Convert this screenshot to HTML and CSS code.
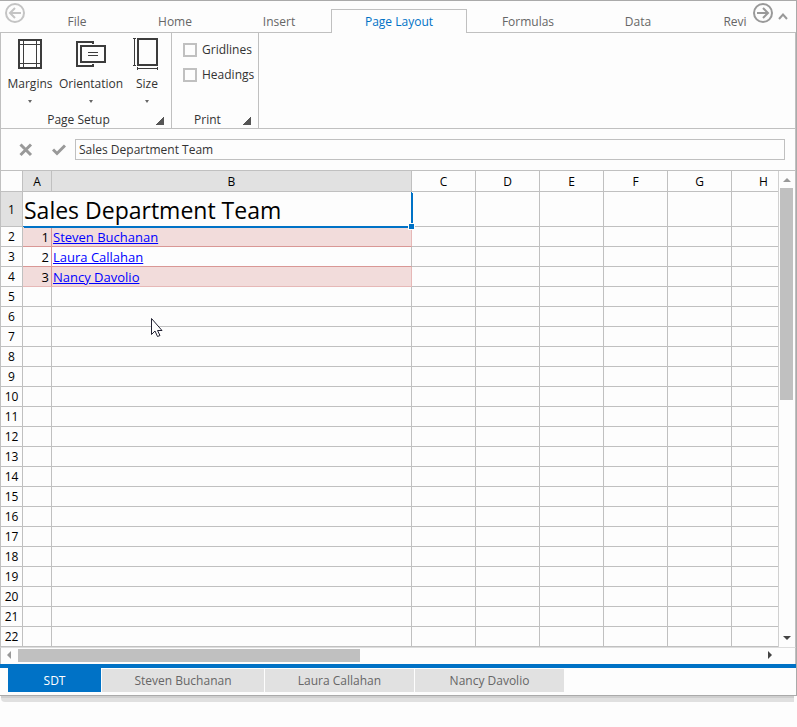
FILE: index.html
```html
<!DOCTYPE html>
<html lang="en">
<head>
<meta charset="utf-8">
<title>Sales Department Team</title>
<link rel="stylesheet" href="styles.css">
</head>
<body>
<main class="app">
  <header class="tabbar">
    <button class="round-btn round-btn-off" aria-label="Scroll tabs left">
      <svg width="20" height="20" viewBox="0 0 20 20"><circle cx="10" cy="10" r="9"/><path d="M16 10H6M10 5L5 10L10 15"/></svg>
    </button>
    <nav class="tabs">
      <button class="tab tab-file">File</button>
      <button class="tab tab-mid">Home</button>
      <button class="tab tab-mid">Insert</button>
      <button class="tab tab-wide tab-active">Page Layout</button>
      <button class="tab tab-long">Formulas</button>
      <button class="tab tab-data">Data</button>
      <button class="tab tab-review">Review</button>
    </nav>
    <button class="round-btn" aria-label="Scroll tabs right">
      <svg width="20" height="20" viewBox="0 0 20 20"><circle cx="10" cy="10" r="9"/><path d="M4 10H14M10 5L15 10L10 15"/></svg>
    </button>
    <button class="collapse-btn" aria-label="Collapse ribbon">
      <svg width="10" height="8" viewBox="0 0 10 8"><path d="M1 7L5 2.500L9 7"/></svg>
    </button>
  </header>

  <section class="ribbon">
    <div class="group group-setup">
      <div class="group-items">
        <button class="tool tool-margins">
          <svg width="34" height="34" viewBox="0 0 34 34"><path class="thick" d="M6 3H28V31H6Z"/><path class="thin" d="M10.500 2V32M23.500 2V32M5 7.500H29M5 26.500H29"/></svg>
          <span>Margins</span><i class="drop"></i>
        </button>
        <button class="tool tool-orientation">
          <svg width="34" height="34" viewBox="0 0 34 34"><path class="thick" d="M19 7V5H3V29H19V27M7 9H31V25H7Z"/><path class="thin" d="M14 15.500H24M14 18.500H24"/></svg>
          <span>Orientation</span><i class="drop"></i>
        </button>
        <button class="tool tool-size">
          <svg width="34" height="34" viewBox="0 0 34 34"><path class="thick" d="M8 2H27V28H8Z"/><path class="thin" d="M3 1.500H6M3 28.500H6M4.500 1V29M7.500 30V33M27.500 30V33M7 31.500H28"/></svg>
          <span>Size</span><i class="drop"></i>
        </button>
      </div>
      <div class="group-title">Page Setup<button class="launcher" aria-label="Page setup options"></button></div>
    </div>
    <div class="group group-print">
      <div class="checks">
        <label class="check"><input type="checkbox">Gridlines</label>
        <label class="check"><input type="checkbox">Headings</label>
      </div>
      <div class="group-title">Print<button class="launcher" aria-label="Print options"></button></div>
    </div>
  </section>

  <section class="formula">
    <button class="formula-btn" aria-label="Cancel"><svg width="14" height="14" viewBox="0 0 14 14"><path d="M1.500 1.500L12 12M12 1.500L1.500 12"/></svg></button>
    <button class="formula-btn" aria-label="Enter"><svg width="14" height="14" viewBox="0 0 14 14"><path d="M1 6.500L5 10.500L13 2.500"/></svg></button>
    <input class="formula-input" type="text" aria-label="Formula" value="Sales Department Team">
  </section>

  <section class="sheet">
    <div class="grid">
      <table class="cells">
        <colgroup><col class="c-num"><col class="c-a"><col class="c-b"><col class="c-n"><col class="c-n"><col class="c-n"><col class="c-n"><col class="c-n"><col class="c-n"></colgroup>
        <thead><tr><th></th><th class="on">A</th><th class="on">B</th><th>C</th><th>D</th><th>E</th><th>F</th><th>G</th><th>H</th></tr></thead>
        <tbody>
          <tr class="title-row"><th class="on">1</th><td colspan="2" class="title-cell">Sales Department Team<span class="handle"></span></td><td></td><td></td><td></td><td></td><td></td><td></td></tr>
          <tr class="rec band"><th>2</th><td class="num">1</td><td><a href="#steven">Steven Buchanan</a></td><td></td><td></td><td></td><td></td><td></td><td></td></tr>
          <tr class="rec"><th>3</th><td class="num">2</td><td><a href="#laura">Laura Callahan</a></td><td></td><td></td><td></td><td></td><td></td><td></td></tr>
          <tr class="rec band last"><th>4</th><td class="num">3</td><td><a href="#nancy">Nancy Davolio</a></td><td></td><td></td><td></td><td></td><td></td><td></td></tr>
          <tr><th>5</th><td></td><td></td><td></td><td></td><td></td><td></td><td></td><td></td></tr>
          <tr><th>6</th><td></td><td></td><td></td><td></td><td></td><td></td><td></td><td></td></tr>
          <tr><th>7</th><td></td><td></td><td></td><td></td><td></td><td></td><td></td><td></td></tr>
          <tr><th>8</th><td></td><td></td><td></td><td></td><td></td><td></td><td></td><td></td></tr>
          <tr><th>9</th><td></td><td></td><td></td><td></td><td></td><td></td><td></td><td></td></tr>
          <tr><th>10</th><td></td><td></td><td></td><td></td><td></td><td></td><td></td><td></td></tr>
          <tr><th>11</th><td></td><td></td><td></td><td></td><td></td><td></td><td></td><td></td></tr>
          <tr><th>12</th><td></td><td></td><td></td><td></td><td></td><td></td><td></td><td></td></tr>
          <tr><th>13</th><td></td><td></td><td></td><td></td><td></td><td></td><td></td><td></td></tr>
          <tr><th>14</th><td></td><td></td><td></td><td></td><td></td><td></td><td></td><td></td></tr>
          <tr><th>15</th><td></td><td></td><td></td><td></td><td></td><td></td><td></td><td></td></tr>
          <tr><th>16</th><td></td><td></td><td></td><td></td><td></td><td></td><td></td><td></td></tr>
          <tr><th>17</th><td></td><td></td><td></td><td></td><td></td><td></td><td></td><td></td></tr>
          <tr><th>18</th><td></td><td></td><td></td><td></td><td></td><td></td><td></td><td></td></tr>
          <tr><th>19</th><td></td><td></td><td></td><td></td><td></td><td></td><td></td><td></td></tr>
          <tr><th>20</th><td></td><td></td><td></td><td></td><td></td><td></td><td></td><td></td></tr>
          <tr><th>21</th><td></td><td></td><td></td><td></td><td></td><td></td><td></td><td></td></tr>
          <tr><th>22</th><td></td><td></td><td></td><td></td><td></td><td></td><td></td><td></td></tr>
        </tbody>
      </table>
      <svg class="pointer" width="13" height="21" viewBox="0 0 13 21"><path d="M1.500 1.500V17.500L5 14L7.500 19.500L10 18.500L7.500 13.500H12Z"/></svg>
    </div>
    <div class="vscroll"><i class="arrow up"></i><div class="vtrack"><div class="vthumb"></div></div><i class="arrow down"></i></div>
  </section>
  <div class="hscroll"><i class="arrow left"></i><div class="htrack"><div class="hthumb"></div></div><i class="arrow right"></i></div>

  <footer class="sheets">
    <button class="sheet-tab sheet-active">SDT</button>
    <button class="sheet-tab sheet-long">Steven Buchanan</button>
    <button class="sheet-tab sheet-mid">Laura Callahan</button>
    <button class="sheet-tab sheet-mid">Nancy Davolio</button>
  </footer>
</main>
<div class="shade"></div>
</body>
</html>
```
FILE: styles.css
```css
* { box-sizing: border-box; }

body {
  margin: 0;
  background: #fdfdfd;
  color: #333;
  font: 12px/16px "Open Sans", "Noto Sans", sans-serif;
}

button {
  margin: 0;
  padding: 0;
  border: 0;
  background: none;
  color: inherit;
  font: inherit;
}

svg { display: block; fill: none; }

.app {
  border-top: 1px solid #aaa;
  border-right: 1px solid #aaa;
  border-bottom: 1px solid #aaa;
}
.shade {
  height: 6px;
  margin: 0 3px 0 1px;
  border-top: 2px solid #cfcfcf;
  border-radius: 0 0 0 4px;
  background: #e0e0e0;
}

/* Ribbon tabs */
.tabbar {
  display: flex;
  height: 32px;
  padding: 0 7px 0 5px;
  box-shadow: inset 0 -1px #c0c0c0;
}
.round-btn { width: 20px; height: 20px; margin-top: 2px; flex: none; }
.round-btn svg { stroke: #999; stroke-width: 2; }
.round-btn-off svg { stroke: #c4c4c4; }
.tabs {
  display: flex;
  flex: 1;
  min-width: 0;
  margin-right: 6px;
  padding: 8px 0 0 6px;
  overflow: hidden;
}
.tab {
  flex: none;
  height: 24px;
  border: 1px solid transparent;
  border-bottom: 0;
  color: #666;
}
.tab-file { width: 92px; }
.tab-mid { width: 104px; }
.tab-wide { width: 136px; }
.tab-long { width: 122px; }
.tab-data { width: 98px; }
.tab-review { width: 112px; }
.tab-active { border-color: #c0c0c0; background: #fdfdfd; color: #0072c6; }
.collapse-btn { margin: 10px 1px 0 5px; height: 10px; }
.collapse-btn svg { stroke: #999; stroke-width: 2; }

/* Ribbon groups */
.ribbon {
  display: flex;
  height: 96px;
  border-left: 1px solid #c0c0c0;
  border-right: 1px solid #c0c0c0;
  border-bottom: 1px solid #c0c0c0;
}
.group {
  display: flex;
  flex-direction: column;
  justify-content: space-between;
  border-right: 1px solid #c0c0c0;
}
.group-setup { width: 171px; }
.group-print { width: 87px; }
.group-items { display: flex; padding: 4px 0 0 4px; }
.tool { display: flex; flex-direction: column; align-items: center; }
.tool-margins { width: 50px; }
.tool-orientation { width: 72px; }
.tool-size { width: 40px; }
.tool span { margin-top: 5px; }
.thick { stroke: #3c3c3c; stroke-width: 2; }
.thin { stroke: #3c3c3c; stroke-width: 1; }
.drop {
  margin-top: 8px;
  border: 2px solid transparent;
  border-top: 3px solid #666;
  border-bottom: 0;
}
.group-title {
  display: flex;
  justify-content: center;
  height: 16px;
  position: relative;
  padding-right: 15px;
}
.launcher {
  position: absolute;
  right: 7px;
  bottom: 3px;
  width: 8px;
  height: 8px;
  background: linear-gradient(135deg, transparent 50%, #555 50%);
}
.checks { display: flex; flex-direction: column; gap: 9px; padding: 9px 0 0 11px; }
.check { display: flex; align-items: center; gap: 5px; white-space: nowrap; }
.check input {
  appearance: none;
  width: 14px;
  height: 14px;
  margin: 0;
  border: 2px solid #c0c0c0;
}

/* Formula bar */
.formula {
  display: flex;
  align-items: center;
  height: 42px;
  padding: 0 10px 0 18px;
  border: 1px solid #c0c0c0;
  border-top: 0;
}
.formula-btn { margin-right: 19px; }
.formula-btn + .formula-btn { margin-right: 9px; }
.formula-btn svg { stroke: #999; stroke-width: 3; }
.formula-input {
  flex: 1;
  min-width: 0;
  height: 21px;
  padding: 0 3px;
  border: 1px solid #c0c0c0;
  background: #fdfdfd;
  color: #333;
  font: inherit;
  outline: none;
}

/* Sheet */
.sheet {
  display: flex;
  border-left: 1px solid #c0c0c0;
  border-right: 1px solid #c0c0c0;
}
.grid {
  position: relative;
  flex: 1;
  min-width: 0;
  overflow: hidden;
  border-right: 1px solid #d0d0d0;
}
.cells {
  width: 795px;
  table-layout: fixed;
  border-spacing: 0;
  color: #000;
}
.c-num { width: 22px; }
.c-a { width: 29px; }
.c-b { width: 360px; }
.c-n { width: 64px; }
.cells th, .cells td {
  height: 20px;
  padding: 2px 1px 0;
  border-right: 1px solid #c0c0c0;
  border-bottom: 1px solid #c0c0c0;
  line-height: 17px;
  white-space: nowrap;
}
.cells th { padding: 0; font-weight: 400; line-height: 19px; }
.cells thead th { height: 21px; }
.cells .on { background: #e1e1e1; }
.cells td { font-size: 13px; }
.cells .num { padding-right: 2px; text-align: right; }
.cells .title-row > * { height: 35px; }
.cells .title-cell {
  position: relative;
  border-color: #0072c6;
  box-shadow: 1px 1px #0072c6;
  font-size: 23px;
  line-height: 32px;
}
.handle {
  position: absolute;
  right: -4px;
  bottom: -4px;
  width: 7px;
  height: 7px;
  border: 1px solid #fdfdfd;
  background: #0072c6;
}
.rec td:nth-child(2), .rec td:nth-child(3) { border-bottom-color: #d99795; }
.rec .num { border-right-color: #d99795; }
.band td:nth-child(2), .band td:nth-child(3) { background: #f2dcdb; }
.band td:nth-child(3) { border-right-color: #e6b8b7; }
.last td:nth-child(2), .last td:nth-child(3) { border-bottom-color: #e6b8b7; }
.cells a { color: #00f; }
.pointer { position: absolute; left: 149px; top: 146px; }
.pointer path { fill: #fff; stroke: #223; }

/* Scroll bars */
.vscroll { display: flex; flex-direction: column; align-items: center; width: 16px; padding: 7px 2px 7px 1px; }
.vtrack { flex: 1; width: 13px; margin: 6px 0; }
.vthumb { width: 100%; height: 48%; background: #c0c0c0; }
.hscroll {
  display: flex;
  align-items: center;
  height: 17px;
  padding: 0 23px 2px 6px;
  border: 1px solid #c0c0c0;
  border-top-color: #ddd;
  border-bottom: 0;
}
.htrack { flex: 1; height: 13px; margin: 0 6px 0 7px; }
.hthumb { width: 46%; height: 100%; background: #c0c0c0; }
.arrow { border: 4px solid transparent; }
.up { border-top: 0; border-bottom-color: #999; }
.down { border-bottom: 0; border-top-color: #444; }
.left { border-left: 0; border-right-color: #999; }
.right { border-right: 0; border-left-color: #444; }

/* Sheet tabs */
.sheets {
  display: flex;
  gap: 1px;
  height: 31px;
  padding: 0 8px 3px;
  border-top: 4px solid #0072c6;
}
.sheet-tab { width: 93px; margin-top: 1px; background: #e1e1e1; color: #666; }
.sheet-active { margin-top: 0; padding-top: 1px; background: #0072c6; color: #fff; }
.sheet-long { width: 162px; }
.sheet-mid { width: 149px; }
```
